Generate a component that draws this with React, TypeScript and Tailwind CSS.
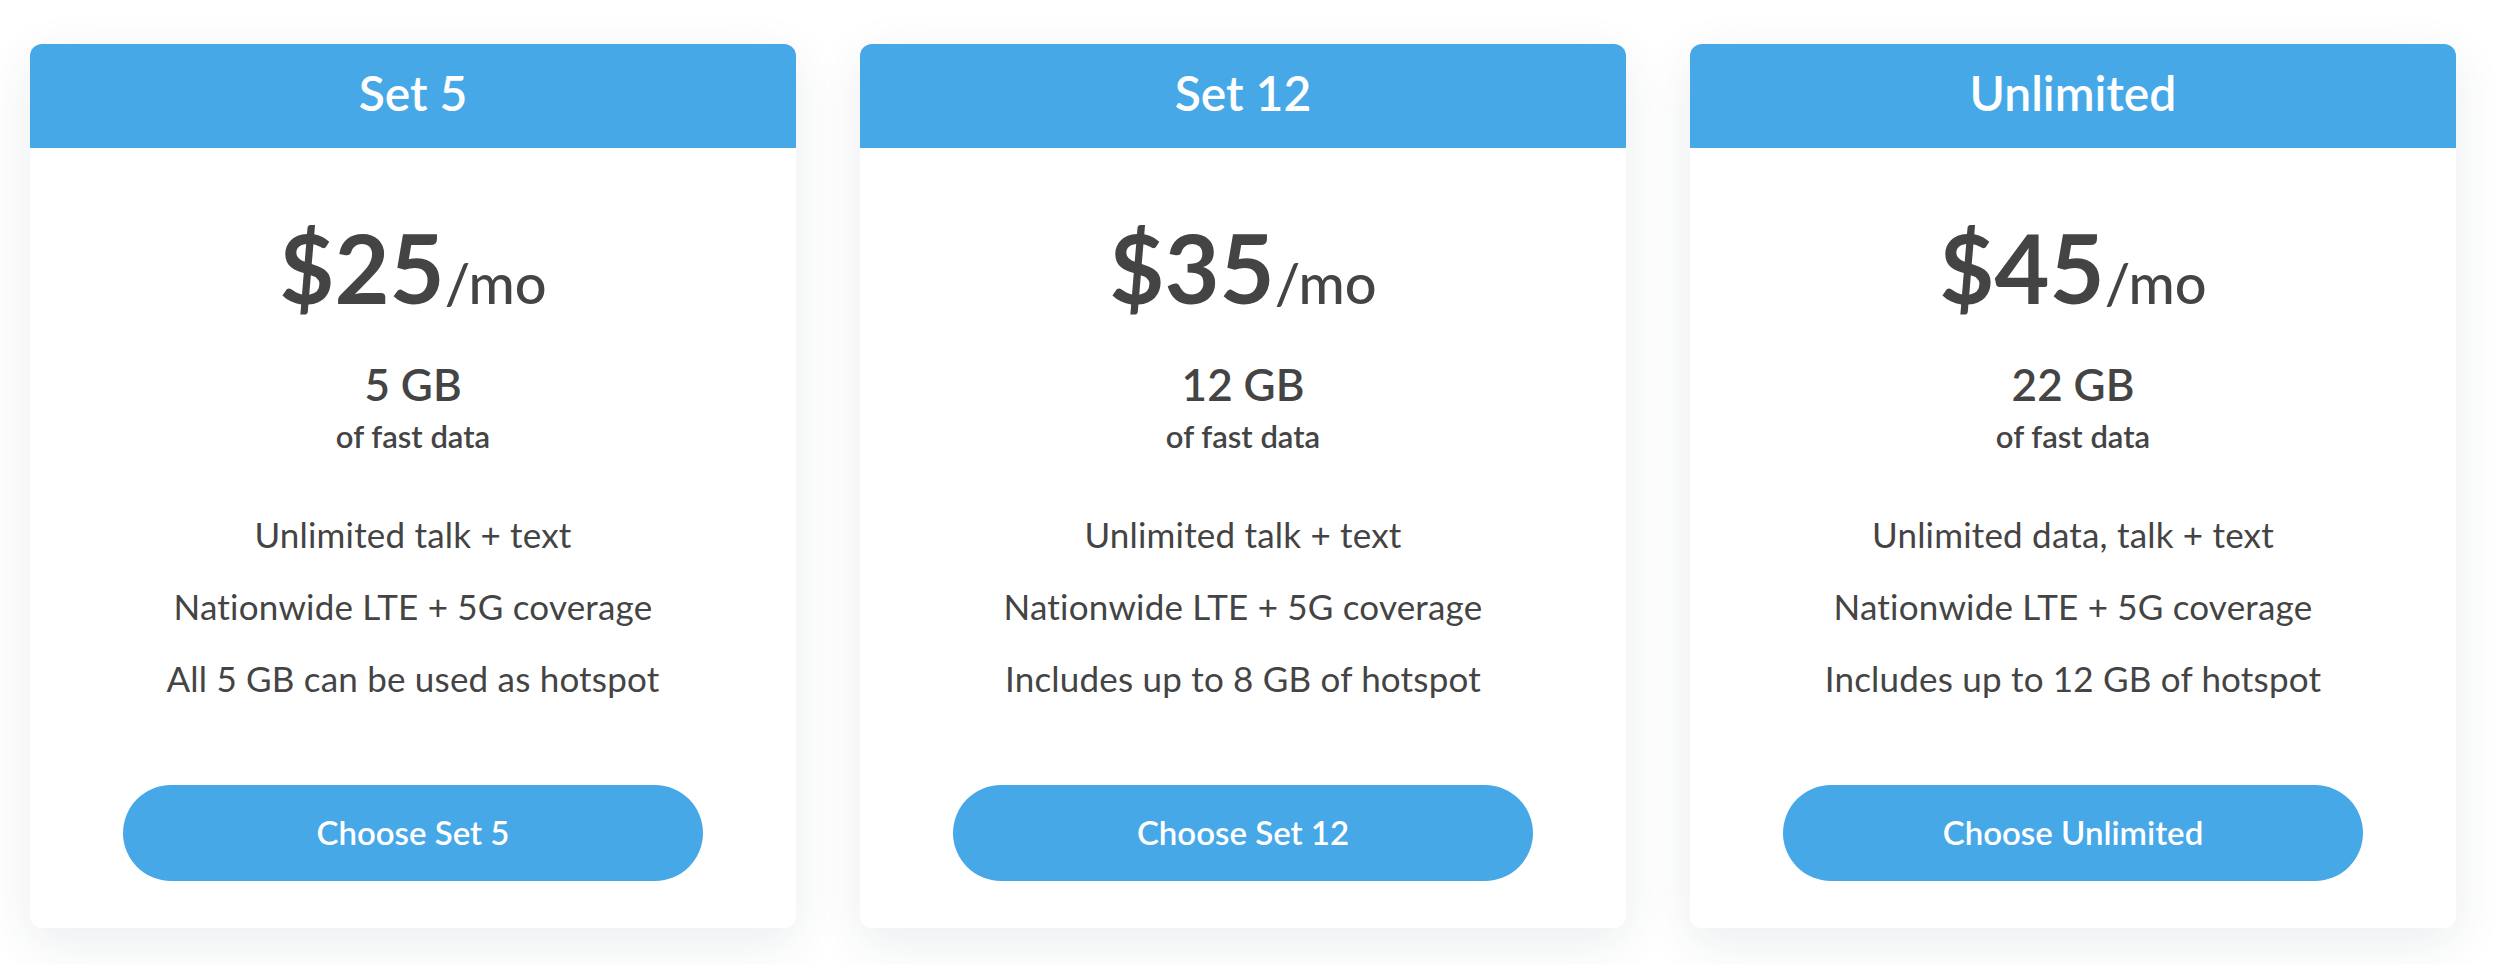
import React from 'react';

interface Plan {
  name: string;
  price: string;
  data: string;
  features: string[];
}

const plans: Plan[] = [
  {
    name: 'Set 5',
    price: '$25',
    data: '5 GB',
    features: ['Unlimited talk + text', 'Nationwide LTE + 5G coverage', 'All 5 GB can be used as hotspot'],
  },
  {
    name: 'Set 12',
    price: '$35',
    data: '12 GB',
    features: ['Unlimited talk + text', 'Nationwide LTE + 5G coverage', 'Includes up to 8 GB of hotspot'],
  },
  {
    name: 'Unlimited',
    price: '$45',
    data: '22 GB',
    features: ['Unlimited data, talk + text', 'Nationwide LTE + 5G coverage', 'Includes up to 12 GB of hotspot'],
  },
];

const PlanCard = ({ plan }: { plan: Plan }) => {
  return (
    <div className="w-[766px] rounded-[12px] bg-white shadow-[0_14px_50px_rgba(30,50,80,0.09)] overflow-hidden flex flex-col items-center text-[#444444]">
      <div className="w-full h-[104px] pb-[6px] bg-[#47a8e8] flex items-center justify-center">
        <span className="text-white text-[48px] font-semibold leading-none">{plan.name}</span>
      </div>
      <div className="mt-[72px] flex items-baseline leading-none">
        <span className="text-[95px] font-bold">{plan.price}</span>
        <span className="text-[56px] font-medium">/mo</span>
      </div>
      <div className="mt-[47px] text-[44px] font-semibold leading-none">{plan.data}</div>
      <div className="mt-[15px] text-[31px] font-semibold leading-none">of fast data</div>
      <div className="mt-[65px] flex flex-col items-center gap-[37px]">
        {plan.features.map((f) => (
          <div key={f} className="text-[35px] leading-none tracking-[0.2px]">
            {f}
          </div>
        ))}
      </div>
      <button className="mt-[89px] mb-[47px] w-[580px] h-[96px] rounded-full bg-[#47a8e8] text-white text-[33px] font-semibold">
        Choose {plan.name}
      </button>
    </div>
  );
};

export default function App() {
  return (
    <div
      className="w-[2510px] h-[964px] bg-white pl-[30px] pt-[44px] flex gap-[64px]"
      style={{ fontFamily: 'Lato, "Noto Sans", sans-serif' }}
    >
      {plans.map((p) => (
        <div key={p.name} className="self-start">
          <PlanCard plan={p} />
        </div>
      ))}
    </div>
  );
}
